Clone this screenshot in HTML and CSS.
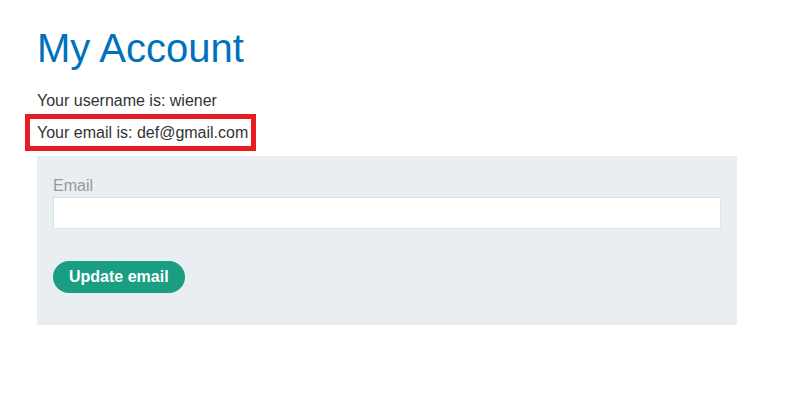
FILE: index.html
```html
<!DOCTYPE html>
<html lang="en">
  <head>
    <meta charset="UTF-8" />
    <meta name="viewport" content="width=device-width, initial-scale=1.0" />
    <title>My Account</title>
    <link rel="stylesheet" href="styles.css">
  </head>
  <body>
    <div class="container">
      <h1>My Account</h1>
      <div class="account-info">
        <p>Your username is: wiener</p>
        <p class="highlight">Your email is: def@gmail.com</p>
      </div>
      <form class="email-form" onsubmit="return false;">
        <label for="email">Email</label>
        <input type="email" name="email" id="email" />
        <button type="submit">Update email</button>
      </form>
    </div>
  </body>
</html>
```

FILE: styles.css
```css
body {
  margin: 0;
  background-color: #fff;
  font-family: "Liberation Sans", Arial, sans-serif;
  font-size: 16px;
  color: #333;
}

.container {
  padding: 25px 71px 0 37px;
}

h1 {
  margin: 0 0 18px;
  font-size: 40px;
  font-weight: normal;
  line-height: 46px;
  color: #0071bc;
}

.account-info p {
  margin: 0 0 8px;
  line-height: 24px;
}

.account-info .highlight {
  position: relative;
  display: inline-block;
  margin-bottom: 11px;
}

.account-info .highlight::after {
  content: "";
  position: absolute;
  top: -7px;
  bottom: -6px;
  left: -12px;
  right: -8px;
  border: 5px solid #e91c23;
}

.email-form {
  display: flex;
  flex-direction: column;
  align-items: flex-start;
  padding: 20px 16px 32px;
  background-color: #e8eef1;
}

.email-form label {
  color: #999;
  line-height: 20px;
  margin-bottom: 1px;
}

.email-form input {
  box-sizing: border-box;
  width: 100%;
  height: 32px;
  margin: 0 0 32px;
  padding: 4px 8px;
  border: 1px solid #e0e3e5;
  background-color: #fff;
  font-family: inherit;
  font-size: 16px;
}

.email-form button {
  height: 32px;
  padding: 0 16px;
  border: none;
  border-radius: 16px;
  background-color: #1a9e82;
  color: #fff;
  font-family: inherit;
  font-size: 16px;
  font-weight: bold;
  cursor: pointer;
}
```
